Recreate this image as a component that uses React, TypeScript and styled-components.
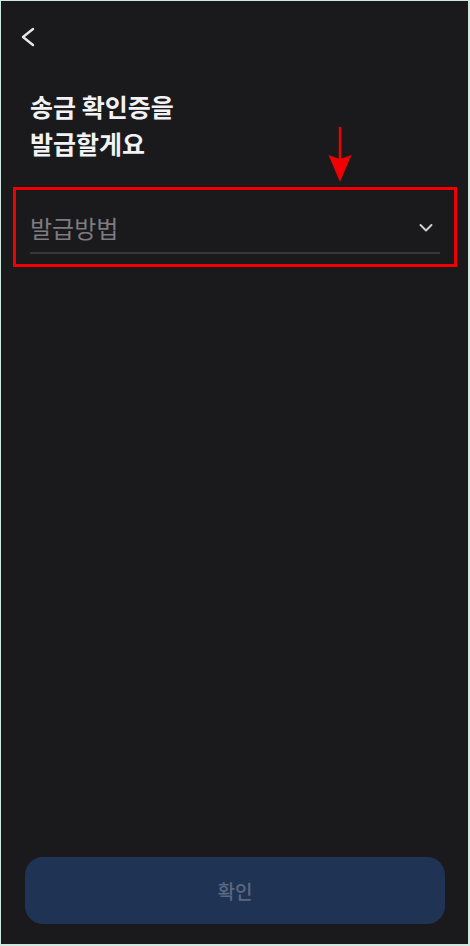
import React from 'react';
import styled, { createGlobalStyle } from 'styled-components';

const GlobalStyle = createGlobalStyle`
  html, body {
    margin: 0;
    padding: 0;
    background: #1a1a1d;
  }
  * {
    box-sizing: border-box;
  }
`;

const App = () => {
  return (
    <>
      <GlobalStyle />
      <Screen>
        <Header>
          <BackButton aria-label='뒤로'>
            <svg width='20' height='20' viewBox='0 0 20 20' fill='none'>
              <path d='M15 2 L5 10 L15 18' stroke='#e6e6e8' strokeWidth='2.4' strokeLinecap='round' strokeLinejoin='round' />
            </svg>
          </BackButton>
        </Header>

        <Title>
          송금 확인증을
          <br />
          발급할게요
        </Title>

        <Highlight>
          <Arrow width='26' height='58' viewBox='0 0 26 58'>
            <line x1='13' y1='2' x2='13' y2='36' stroke='#f00000' strokeWidth='2.4' />
            <polygon points='1.5,30 13,34 24.5,30 13,57' fill='#f00000' />
          </Arrow>
          <SelectRow>
            <Placeholder>발급방법</Placeholder>
            <svg width='16' height='16' viewBox='0 0 16 16' fill='none'>
              <path d='M2.5 5 L8 10.5 L13.5 5' stroke='#cfcfd2' strokeWidth='2' strokeLinecap='round' strokeLinejoin='round' />
            </svg>
          </SelectRow>
        </Highlight>

        <Spacer />

        <ConfirmButton disabled>확인</ConfirmButton>
      </Screen>
    </>
  );
};

const Screen = styled.div`
  width: 470px;
  height: 946px;
  display: flex;
  flex-direction: column;
  background: #1a1a1d;
  border-style: solid;
  border-color: #cfe8e0;
  border-width: 1px 2px 2px 1px;
  font-family: 'Noto Sans CJK KR', 'Noto Sans', sans-serif;
`;

const Header = styled.div`
  height: 64px;
  padding: 26px 0 0 17px;
`;

const BackButton = styled.button`
  display: flex;
  padding: 0;
  border: none;
  background: transparent;
`;

const Title = styled.h1`
  margin: 23px 0 0 29px;
  font-size: 25px;
  line-height: 37px;
  font-weight: 700;
  color: #f2f2f4;
`;

const Highlight = styled.div`
  position: relative;
  margin: 25px 11px 0 12px;
  height: 80px;
  border: 3px solid #f00000;
  padding: 23px 14px 0 14px;
`;

const Arrow = styled.svg`
  position: absolute;
  left: 311px;
  top: -65px;
`;

const SelectRow = styled.div`
  display: flex;
  align-items: center;
  justify-content: space-between;
  padding: 0 6px 9px 0;
  border-bottom: 2px solid #37373b;
`;

const Placeholder = styled.span`
  font-size: 24px;
  line-height: 30px;
  color: #7c7c81;
`;

const Spacer = styled.div`
  flex: 1;
`;

const ConfirmButton = styled.button`
  margin: 0 23px 20px 24px;
  height: 67px;
  border: none;
  border-radius: 18px;
  background: #1f3355;
  color: #5a6880;
  font-family: 'Noto Sans CJK KR', 'Noto Sans', sans-serif;
  font-size: 19px;
  font-weight: 500;
`;

export default App;
